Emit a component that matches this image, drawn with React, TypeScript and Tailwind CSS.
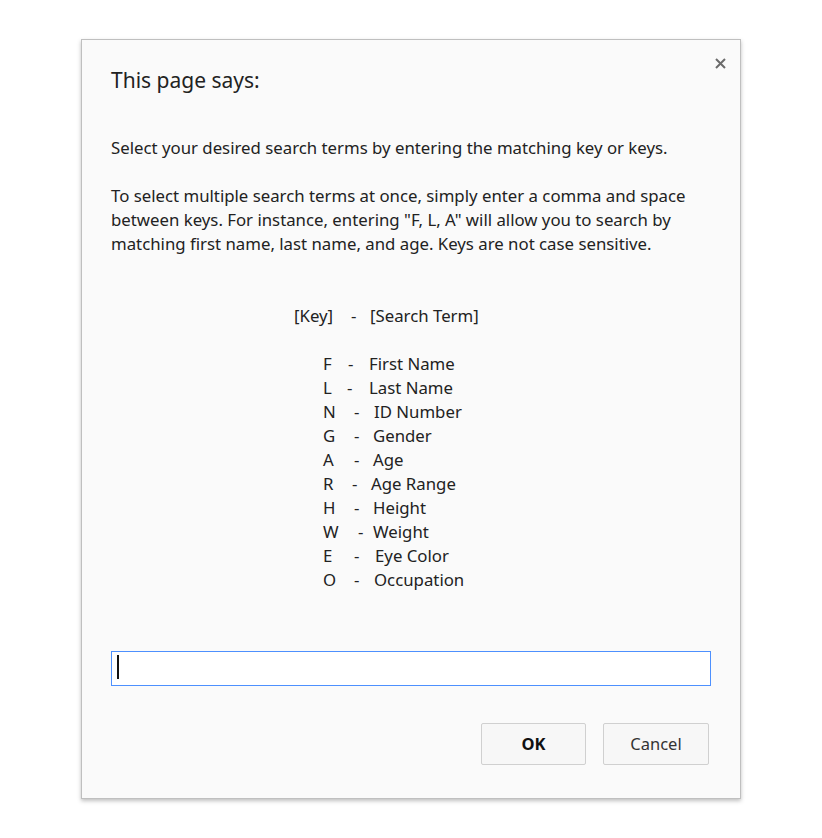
const terms = [
  { k: "F", keyW: "w-[25px]", dashW: "w-[21px]", t: "First Name" },
  { k: "L", keyW: "w-[24px]", dashW: "w-[22px]", t: "Last Name" },
  { k: "N", keyW: "w-[31px]", dashW: "w-[20px]", t: "ID Number" },
  { k: "G", keyW: "w-[31px]", dashW: "w-[19px]", t: "Gender" },
  { k: "A", keyW: "w-[31px]", dashW: "w-[19px]", t: "Age" },
  { k: "R", keyW: "w-[29px]", dashW: "w-[19px]", t: "Age Range" },
  { k: "H", keyW: "w-[31px]", dashW: "w-[19px]", t: "Height" },
  { k: "W", keyW: "w-[35px]", dashW: "w-[15px]", t: "Weight" },
  { k: "E", keyW: "w-[31px]", dashW: "w-[21px]", t: "Eye Color" },
  { k: "O", keyW: "w-[31px]", dashW: "w-[20px]", t: "Occupation" },
];

export default function App() {
  return (
    <div className="min-h-[838px] w-[822px] bg-white pt-[39px] pl-[81px] font-['Noto_Sans',sans-serif] text-[#222]">
      <div className="relative w-[660px] h-[760px] border border-[#bfbfbf] bg-[#fafafa] shadow-[0_2px_4px_rgba(0,0,0,0.25)] pt-[26px] pl-[29px] pr-[29px]">
        {/* close */}
        <button className="absolute top-[15px] right-[12px] w-[16px] h-[16px] flex items-center justify-center text-[#6b6b6b]">
          <svg width="11" height="11" viewBox="0 0 11 11" fill="none" stroke="currentColor" strokeWidth="2">
            <path d="M1 1L10 10M10 1L1 10" />
          </svg>
        </button>

        <h1 className="text-[21px] leading-[28px] text-[#222]">This page says:</h1>

        {/* message */}
        <div className="mt-[42px] text-[16.8px] leading-[24px]">
          <p>Select your desired search terms by entering the matching key or keys.</p>
          <p className="mt-[24px]">
            To select multiple search terms at once, simply enter a comma and space
            between keys. For instance, entering "F, L, A" will allow you to search by
            matching first name, last name, and age. Keys are not case sensitive.
          </p>

          <div className="mt-[48px] flex pl-[183px]">
            <span className="w-[57px]">[Key]</span>
            <span className="w-[19px]">-</span>
            <span>[Search Term]</span>
          </div>

          <div className="mt-[24px]">
            {terms.map((r) => (
              <div key={r.k} className="flex pl-[212px]">
                <span className={r.keyW}>{r.k}</span>
                <span className={r.dashW}>-</span>
                <span>{r.t}</span>
              </div>
            ))}
          </div>
        </div>

        {/* input */}
        <div className="relative mt-[59px]">
          <input className="block w-[600px] h-[35px] border border-[#4d90fe] bg-white px-[6px] outline-none caret-transparent" />
          <span className="absolute left-[6px] top-[4px] w-[2px] h-[24px] bg-[#111]" />
        </div>

        {/* buttons */}
        <div className="mt-[37px] flex justify-end gap-[17px] pr-[2px]">
          <button className="w-[105px] h-[42px] rounded-[2px] border border-[#d0d0d0] bg-[#f7f7f7] text-[16.5px] font-bold text-[#111]">
            OK
          </button>
          <button className="w-[106px] h-[42px] rounded-[2px] border border-[#d0d0d0] bg-[#f7f7f7] text-[16.5px] text-[#333]">
            Cancel
          </button>
        </div>
      </div>
    </div>
  );
}
